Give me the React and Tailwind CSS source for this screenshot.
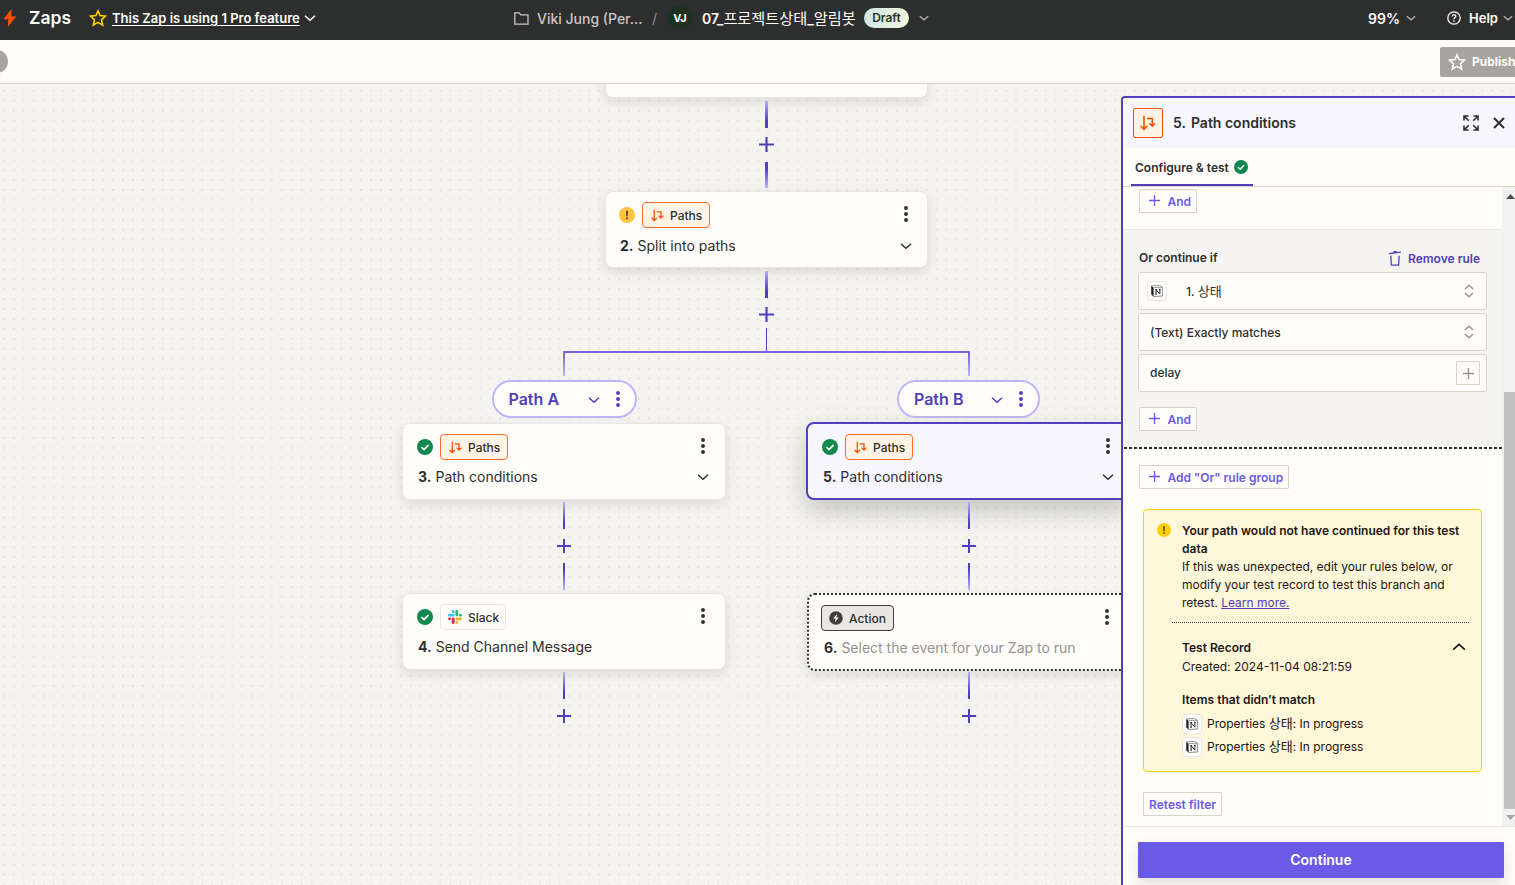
import React from 'react';
import clsx from 'clsx';

const ChevronDown = ({ className, size = 12 }) => (
  <svg width={size} height={size} viewBox="0 0 12 12" fill="none" stroke="currentColor" strokeWidth="1.5" className={className}>
    <path d="M1 3.8 6 8.2l5-4.4" />
  </svg>
);

const Plus = ({ className, size = 14, stroke = 2 }) => (
  <svg width={size} height={size} viewBox="0 0 14 14" fill="none" stroke="currentColor" strokeWidth={stroke} className={className}>
    <path d="M7 0v14M0 7h14" />
  </svg>
);

const Kebab = ({ className }) => (
  <svg width="4" height="16" viewBox="0 0 4 16" fill="currentColor" className={clsx('shrink-0', className)}>
    <circle cx="2" cy="2" r="1.95" />
    <circle cx="2" cy="8" r="1.95" />
    <circle cx="2" cy="14" r="1.95" />
  </svg>
);

const Star = ({ className }) => (
  <svg width="18" height="18" viewBox="0 0 18 18" fill="none" stroke="currentColor" strokeWidth="1.6" className={className}>
    <path d="M9 1.9l2.1 4.7 5.4.5-4 3.7 1.2 5.4L9 13.4l-4.7 2.8 1.2-5.4-4-3.7 5.4-.5z" />
  </svg>
);

const PathsIcon = ({ size = 12 }) => (
  <svg width={size} height={size} viewBox="0 0 16 16" fill="none" stroke="#ff4f00" strokeWidth="1.6" className="shrink-0">
    <path d="M4 .8v13M.8 11 4 14.3 7.2 11M7 3.5h5.3v7M9.4 8.2l2.9 3 2.9-3" />
  </svg>
);

const CheckBadge = ({ size = 16 }) => (
  <svg width={size} height={size} viewBox="0 0 16 16" className="shrink-0">
    <circle cx="8" cy="8" r="8" fill="#0f884e" />
    <path d="M4.4 8.1 7 10.5l4.6-4.7" fill="none" stroke="#fffdf9" strokeWidth="1.7" />
  </svg>
);

const WarnBadge = ({ size = 16, fill = '#ffc43e' }) => (
  <svg width={size} height={size} viewBox="0 0 16 16" className="shrink-0">
    <circle cx="8" cy="8" r="8" fill={fill} />
    <path d="M7 3.8h2L8.7 9.3H7.3zM7.1 10.5h1.8v1.7H7.1z" fill="#403f3e" />
  </svg>
);

const SlackLogo = () => (
  <svg width="14" height="14" viewBox="0 0 24 24" className="shrink-0">
    <path fill="#36c5f0" d="M8.8 0a2.5 2.5 0 0 0 0 5h2.5V2.5A2.5 2.5 0 0 0 8.8 0M8.8 6.3H2.5a2.5 2.5 0 0 0 0 5h6.3a2.5 2.5 0 0 0 0-5" />
    <path fill="#2eb67d" d="M24 8.8a2.5 2.5 0 0 0-5 0v2.5h2.5A2.5 2.5 0 0 0 24 8.8M17.7 8.8V2.5a2.5 2.5 0 0 0-5 0v6.3a2.5 2.5 0 0 0 5 0" />
    <path fill="#ecb22e" d="M15.2 24a2.5 2.5 0 0 0 0-5h-2.5v2.5a2.5 2.5 0 0 0 2.5 2.5M15.2 17.7h6.3a2.5 2.5 0 0 0 0-5h-6.3a2.5 2.5 0 0 0 0 5" />
    <path fill="#e01e5a" d="M0 15.2a2.5 2.5 0 0 0 5 0v-2.5H2.5A2.5 2.5 0 0 0 0 15.2M6.3 15.2v6.3a2.5 2.5 0 0 0 5 0v-6.3a2.5 2.5 0 0 0-5 0" />
  </svg>
);

const ActionIcon = () => (
  <svg width="14" height="14" viewBox="0 0 14 14" className="shrink-0">
    <circle cx="7" cy="7" r="6.8" fill="#403f3e" />
    <path d="M7.9 3 4.2 7.6h2.3L6.1 11l3.7-4.6H7.5z" fill="#fffdf9" />
  </svg>
);

const NotionBox = () => (
  <span className="flex h-5 w-5 shrink-0 items-center justify-center rounded-[3px] border border-[#e8e7e4] bg-[#fffdf9]">
    <svg width="12" height="12" viewBox="0 0 13 13">
      <path d="M.6 1 9.4.5l3 2v9.4l-9.6.6L.6 10z" fill="#fff" stroke="#6b6b6b" strokeWidth=".8" />
      <path d="M.5 1v9l2.3 2.5V2.9z" fill="#222" />
      <path d="M2.9 2.9l9.4-.5" stroke="#6b6b6b" strokeWidth=".7" />
      <path d="M5.5 10V4.9M5.3 4.9l4.3 5M9.6 9.9V4.6M4.6 4.9h1.5M8.8 4.6h1.6M4.7 10h1.6" stroke="#111" strokeWidth="1" fill="none" />
    </svg>
  </span>
);

const UpDown = () => (
  <svg width="10" height="14" viewBox="0 0 10 14" fill="none" stroke="#95928e" strokeWidth="1.4">
    <path d="M.9 5 5 1.2 9.1 5M.9 9 5 12.8 9.1 9" />
  </svg>
);

const KR = ({ children }) => (
  <span className="font-['Noto_Sans_CJK_KR',sans-serif] text-[1.085em] leading-none font-normal">{children}</span>
);

const Header = () => (
  <header className="flex h-10 shrink-0 items-center overflow-hidden bg-[#2d2e2e] pb-1 text-[#fffdf9]">
    <svg width="14" height="18" viewBox="0 0 14 18" className="ml-[3px] shrink-0">
      <path d="M8.6 0 .4 10.2h4.9L4.8 18 13.2 7.6H8.3z" fill="#ff4f00" />
    </svg>
    <span className="ml-3 w-[60px] shrink-0 text-[17.5px] font-semibold">Zaps</span>
    <Star className="shrink-0 text-[#ffd000]" />
    <span className="ml-[5px] w-[192px] shrink-0 whitespace-nowrap pt-[2px] text-[13px] font-semibold underline underline-offset-2">
      This Zap is using 1 Pro feature
    </span>
    <ChevronDown className="shrink-0" />

    <svg width="15" height="13" viewBox="0 0 15 13" fill="none" stroke="#c9c7c4" strokeWidth="1.3" className="ml-[198px] shrink-0">
      <path d="M.8.8h4.4l1.6 2h7.2v9.4H.8z" />
    </svg>
    <span className="ml-2 w-[115px] shrink-0 whitespace-nowrap text-[14px] font-medium text-[#c9c7c4]">Viki Jung (Per...</span>
    <span className="w-[16px] shrink-0 text-[14px] text-[#95928e]">/</span>
    <span className="flex h-6 w-6 shrink-0 items-center justify-center rounded-full bg-[#1f3121] text-[11px] font-bold">VJ</span>
    <span className="ml-[10px] w-[162px] shrink-0 whitespace-nowrap text-[14px] font-semibold">
      07_<KR>프로젝트상태</KR>_<KR>알림봇</KR>
    </span>
    <span className="flex h-5 w-[45px] shrink-0 items-center justify-center rounded-full bg-linear-to-r from-[#cfe5e6] to-[#eefadb] text-[12px] font-semibold text-[#2d2e2e]">
      Draft
    </span>
    <ChevronDown size={10} className="ml-[10px] shrink-0 text-[#b5b2ae]" />

    <span className="ml-[439px] w-[38px] shrink-0 text-[14px] font-semibold">99%</span>
    <ChevronDown size={10} className="shrink-0 text-[#b5b2ae]" />
    <svg width="14" height="14" viewBox="0 0 14 14" fill="none" stroke="currentColor" strokeWidth="1.3" className="ml-[31px] shrink-0">
      <circle cx="7" cy="7" r="6.2" />
      <path d="M5.1 5.6C5.2 3 8.9 3.2 8.8 5.4 8.7 6.7 7 6.6 7 8.3M7 9.3v1.4" />
    </svg>
    <span className="ml-2 w-[34px] shrink-0 pt-[2px] text-[13px] font-semibold">Help</span>
    <ChevronDown size={10} className="shrink-0 text-[#b5b2ae]" />
  </header>
);

const SubBar = () => (
  <div className="flex h-11 shrink-0 items-center justify-between overflow-hidden border-b border-[#d7d3c9] bg-[#fffdf9]">
    <span className="-ml-4 h-[23px] w-6 rounded-full bg-[#a8a5a0]" />
    <button className="flex h-[30px] w-[75px] items-center gap-[6px] whitespace-nowrap rounded-l-[2px] bg-[#a8a5a0] pl-2 text-[12px] font-bold text-[#fffdf9]">
      <Star className="shrink-0" />
      Publish
    </button>
  </div>
);

const pillTones = {
  paths: 'border-[#ff6a26] bg-[#fff3e6]',
  slack: 'border-[#e8e7e4] bg-[#fffdf9]',
  action: 'border-[#403f3e] bg-[#e8e7e4]'
};

const AppPill = ({ tone, icon, children, className }) => (
  <span className={clsx('flex h-[26px] items-center rounded-[4px] border text-[12px] font-medium text-[#2d2e2e]', pillTones[tone], className)}>
    {icon}
    <span className="pt-[2px]">{children}</span>
  </span>
);

const PathsPill = () => (
  <AppPill tone="paths" className="w-[68px] gap-[6px] pl-2" icon={<PathsIcon size={13} />}>Paths</AppPill>
);

const StepCard = ({ className, status, pill, number, title, muted, chevron }) => (
  <div className={clsx('absolute flex flex-col rounded-lg text-[#2d2e2e]', className)}>
    <div className="flex items-center">
      {status && <span className="mr-[7px] flex">{status}</span>}
      {pill}
      <Kebab className="mb-[2px] ml-auto mr-1" />
    </div>
    <div className={clsx('flex h-5 items-center text-[14px]', muted ? 'pl-[3px]' : 'pl-px')}>
      <b className="mr-1 font-bold">{number}.</b>
      <span className={muted ? 'text-[#95928e]' : ''}>{title}</span>
      {chevron && <ChevronDown className="ml-auto mt-[2px]" />}
    </div>
  </div>
);

const plainCard = 'h-[77px] border border-[#e8e7e4] bg-[#fffdf9] shadow-[0_4px_12px_rgba(45,46,46,0.13)] pt-[10px]';

// stem, plus button and, when another step follows, a second stem
const Connector = ({ className, thick, end }) => (
  <div className={clsx('absolute flex w-4 flex-col items-center text-[#503ebd]', className)}>
    <span className={clsx('h-[27px] bg-linear-to-b from-[#b9aef5] to-[#503ebd] to-75%', thick ? 'w-[3px]' : 'w-[2px]')} />
    <Plus size={thick ? 15 : 14} className={thick ? 'mb-[10px] mt-[9px]' : 'my-[10px]'} />
    {!end && <span className={clsx('bg-linear-to-b from-[#503ebd] from-25% to-[#c1b4ff]', thick ? 'h-[26px] w-[3px]' : 'h-[27px] w-[2px]')} />}
  </div>
);

const PathLabel = ({ className, children }) => (
  <div className={clsx('absolute flex h-[38px] items-center rounded-full border-2 border-[#c1b4ff] bg-[#fffdf9] px-[15px] text-[#503ebd]', className)}>
    <span className="text-[16px] font-semibold">{children}</span>
    <ChevronDown className="ml-auto mt-px" />
    <Kebab className="ml-4" />
  </div>
);

const Canvas = () => (
  <div className="absolute inset-0 overflow-hidden bg-[#f6f4f1] bg-[radial-gradient(circle,#dfddd9_0.5px,transparent_1.1px)] bg-size-[9.93px_9.93px] bg-position-[-1px_1.8px]">
    <div className="absolute left-[605px] top-[-63px] h-[77px] w-[323px] rounded-lg border border-[#e8e7e4] bg-[#fffdf9] shadow-[0_4px_12px_rgba(45,46,46,0.13)]" />

    <StepCard className={clsx('left-[605px] top-[107px] w-[323px] gap-[7px] pl-[13px] pr-[15.5px]', plainCard)} status={<WarnBadge />} pill={<PathsPill />} number={2} title="Split into paths" chevron />
    <StepCard className={clsx('left-[402px] top-[339px] w-[324px] gap-[6px] pl-[14px] pr-4', plainCard)} status={<CheckBadge />} pill={<PathsPill />} number={3} title="Path conditions" chevron />
    <StepCard
      className={clsx('left-[402px] top-[509px] w-[324px] gap-[6px] pl-[14px] pr-4', plainCard)}
      status={<CheckBadge />}
      pill={<AppPill tone="slack" className="w-[66px] gap-[6px] pl-[7px]" icon={<SlackLogo />}>Slack</AppPill>}
      number={4}
      title="Send Channel Message"
    />
    <StepCard
      className="left-[806px] top-[338px] h-[78px] w-[325px] gap-[6px] border-2 border-[#503ebd] bg-[#f7f6fd] pl-[14px] pr-[15px] pt-[10px] shadow-[0_10px_24px_rgba(45,46,46,0.25)]"
      status={<CheckBadge />}
      pill={<PathsPill />}
      number={5}
      title="Path conditions"
      chevron
    />
    <StepCard
      className="left-[807px] top-[509px] h-[78px] w-[325px] gap-[6px] border-2 border-dotted border-[#2d2e2e] bg-[#fffdf9] pl-3 pr-[17px] pt-[10px] shadow-[0_4px_12px_rgba(45,46,46,0.13)]"
      pill={<AppPill tone="action" className="w-[73px] gap-[6px] pl-[7px]" icon={<ActionIcon />}>Action</AppPill>}
      number={6}
      title="Select the event for your Zap to run"
      muted
    />

    <Connector thick className="left-[758.5px] top-[17px]" />
    <Connector thick end className="left-[758.5px] top-[187px]" />
    <Connector className="left-[556px] top-[418px]" />
    <Connector className="left-[961px] top-[418px]" />
    <Connector end className="left-[556px] top-[588px]" />
    <Connector end className="left-[961px] top-[588px]" />

    {/* fork into path A and path B */}
    <span className="absolute left-[766px] top-[244px] h-[23px] w-px bg-[#503ebd]" />
    <span className="absolute left-[563px] top-[267px] h-[2px] w-[407px] bg-[#7865cf]" />
    <span className="absolute left-[563px] top-[269px] h-[23px] w-[2px] bg-linear-to-b from-[#7865cf] to-[#c1b4ff]" />
    <span className="absolute left-[968px] top-[269px] h-[23px] w-[2px] bg-linear-to-b from-[#7865cf] to-[#c1b4ff]" />

    <PathLabel className="left-[491.5px] top-[296px] w-[145px]">Path A</PathLabel>
    <PathLabel className="left-[897px] top-[296px] w-[143px]">Path B</PathLabel>
  </div>
);

const OutlineButton = ({ children, className, plus = true }) => (
  <button className={clsx('flex h-6 items-center rounded-[1px] border border-[#d7d3c9] bg-[#fffdf9] text-[12px] font-semibold text-[#695be8]', className)}>
    {plus && <Plus size={11} stroke={1.7} className="mb-px mr-2 shrink-0" />}
    <span className="pt-[2px]">{children}</span>
  </button>
);

const Field = ({ children, right }) => (
  <div className="flex h-[38px] items-center rounded-[3px] border border-[#d7d3c9] bg-[#fffdf9] pl-[11px] text-[12px] font-medium">
    {children}
    <span className="ml-auto flex">{right}</span>
  </div>
);

const TestResult = () => (
  <div className="ml-5 mt-5 h-[263px] w-[339px] rounded-[4px] border border-[#ffd000] bg-[#fff7da] pt-[12px] text-[12px] text-[#211511]">
    <div className="flex gap-[11px] pl-[13px]">
      <span className="mt-[1px]"><WarnBadge size={14} fill="#ffd000" /></span>
      <div className="w-[290px] leading-[18px]">
        <p className="font-semibold">Your path would not have continued for this test<br />data</p>
        <p>If this was unexpected, edit your rules below, or<br />modify your test record to test this branch and<br />retest. <a className="text-[#503ebd] underline">Learn more.</a></p>
      </div>
    </div>
    <div className="ml-7 mr-3 mt-[10px] border-t border-dotted border-[#2d2e2e]" />
    <div className="ml-[38px] mr-[15px]">
      <div className="mt-4 flex h-[18px] items-center justify-between font-semibold">
        Test Record
        <ChevronDown size={14} className="mb-[3px] rotate-180" />
      </div>
      <p className="leading-5">Created: 2024-11-04 08:21:59</p>
      <p className="mb-[5px] mt-[14px] leading-[18px] font-semibold">Items that didn’t match</p>
      {[0, 1].map((i) => (
        <div key={i} className="mb-[3px] flex h-5 items-center gap-[5px]">
          <NotionBox />
          <span>Properties <KR>상태</KR>: In progress</span>
        </div>
      ))}
    </div>
  </div>
);

const ScrollBar = () => (
  <div className="flex w-[13px] flex-col items-end bg-[#f1f1f1]">
    <svg width="9" height="5" viewBox="0 0 9 5" className="mt-[7px]"><path d="M4.5 0 9 5H0z" fill="#505050" /></svg>
    <div className="mt-[193px] h-[417px] w-[11px] bg-[#c1c1c1]" />
    <svg width="9" height="5" viewBox="0 0 9 5" className="mt-[6px]"><path d="M4.5 5 0 0h9z" fill="#a3a3a3" /></svg>
  </div>
);

const Panel = () => (
  <aside className="absolute bottom-0 right-0 top-3 flex w-[394px] flex-col overflow-hidden rounded-tl-[4px] border-l-2 border-t-2 border-[#503ebd] bg-[#fffdf9] text-[#2d2e2e]">
    <div className="flex h-[50px] shrink-0 items-center bg-[#f7f6fd] pl-[10px]">
      <span className="flex h-[30px] w-[30px] items-center justify-center rounded-[2px] border border-[#ff4f00] bg-[#fff3e6]">
        <PathsIcon size={16} />
      </span>
      <h2 className="ml-[10px] flex gap-[5px] pb-[2px] text-[14px] font-semibold"><span>5.</span>Path conditions</h2>
      <svg width="16" height="16" viewBox="0 0 16 16" fill="none" stroke="currentColor" strokeWidth="1.6" className="ml-auto">
        <path d="M5.6 1H1v4.6M1 1l4.8 4.8M10.4 1H15v4.6M15 1l-4.8 4.8M5.6 15H1v-4.6M1 15l4.8-4.8M10.4 15H15v-4.6M15 15l-4.8-4.8" />
      </svg>
      <svg width="12" height="12" viewBox="0 0 12 12" fill="none" stroke="currentColor" strokeWidth="2" className="ml-[14px] mr-[10px]">
        <path d="m1 1 10 10M11 1 1 11" />
      </svg>
    </div>
    <div className="flex h-[39px] shrink-0 border-b border-[#d7d3c9] pl-2">
      <div className="flex w-[122px] items-center gap-[5px] whitespace-nowrap border-b-2 border-[#503ebd] pl-1 pt-[2px] text-[12px] font-semibold">
        <span className="pt-px">Configure &amp; test</span>
        <CheckBadge size={14} />
      </div>
    </div>

    <div className="flex h-[639px] shrink-0">
      <div className="w-[379px]">
        <div className="h-[43px] border-b border-[#e8e7e4] pl-4 pt-[2px]">
          <OutlineButton className="w-[58px] pl-[8.5px]">And</OutlineButton>
        </div>
        <div className="h-[217px] bg-[#f6f4f1] px-[15px] pt-[18px]">
          <div className="mb-[4px] flex h-5 items-center justify-between pl-px pr-[7px] text-[12px] font-semibold">
            Or continue if
            <span className="flex items-center gap-[7px] text-[#503ebd]">
              <svg width="12" height="15" viewBox="0 0 12 15" fill="none" stroke="currentColor" strokeWidth="1.3">
                <path d="M0 2.6 12 1.2M5 1.8 5.2.7l2.6-.3M1.8 4.8l.6 9.4h7.2l.6-9.4" />
              </svg>
              <span className="pt-[2px]">Remove rule</span>
            </span>
          </div>
          <div className="flex flex-col gap-[3px]">
            <Field right={<span className="mr-3"><UpDown /></span>}>
              <span className="-ml-[3px] mr-[19px]"><NotionBox /></span>
              <span className="pt-px">1. <KR>상태</KR></span>
            </Field>
            <Field right={<span className="mr-3"><UpDown /></span>}><span className="pt-[2px]">(Text) Exactly matches</span></Field>
            <Field
              right={
                <span className="mr-[6px] flex h-6 w-6 items-center justify-center rounded-[1px] border border-[#d7d3c9] text-[#95928e]">
                  <Plus size={11} stroke={1.7} />
                </span>
              }
            >
              delay
            </Field>
          </div>
          <OutlineButton className="ml-px mt-[15px] w-[58px] pl-[8.5px]">And</OutlineButton>
        </div>
        <div className="ml-px h-[2px] bg-[repeating-linear-gradient(90deg,#2d2e2e_0_3px,#f6f4f1_3px_5px)]" />
        <OutlineButton className="ml-4 mt-4 w-[150px] whitespace-nowrap pl-[8.5px]">Add "Or" rule group</OutlineButton>
        <TestResult />
        <OutlineButton plus={false} className="ml-5 mt-5 w-[79px] justify-center whitespace-nowrap">Retest filter</OutlineButton>
      </div>
      <ScrollBar />
    </div>

    <div className="flex-1 border-t border-[#e8e7e4] pl-[15px] pr-[11px] pt-[15px]">
      <button className="h-9 w-full rounded-[1px] bg-[#695be8] pb-[2px] text-[14px] font-semibold text-[#fffdf9] shadow-[0_6px_14px_rgba(45,46,46,0.15)]">
        Continue
      </button>
    </div>
  </aside>
);

const App = () => (
  <div className="flex h-[885px] w-[1515px] flex-col overflow-hidden font-['Inter','Noto_Sans_CJK_KR',sans-serif]">
    <Header />
    <SubBar />
    <main className="relative flex-1">
      <Canvas />
      <Panel />
    </main>
  </div>
);

export default App;
